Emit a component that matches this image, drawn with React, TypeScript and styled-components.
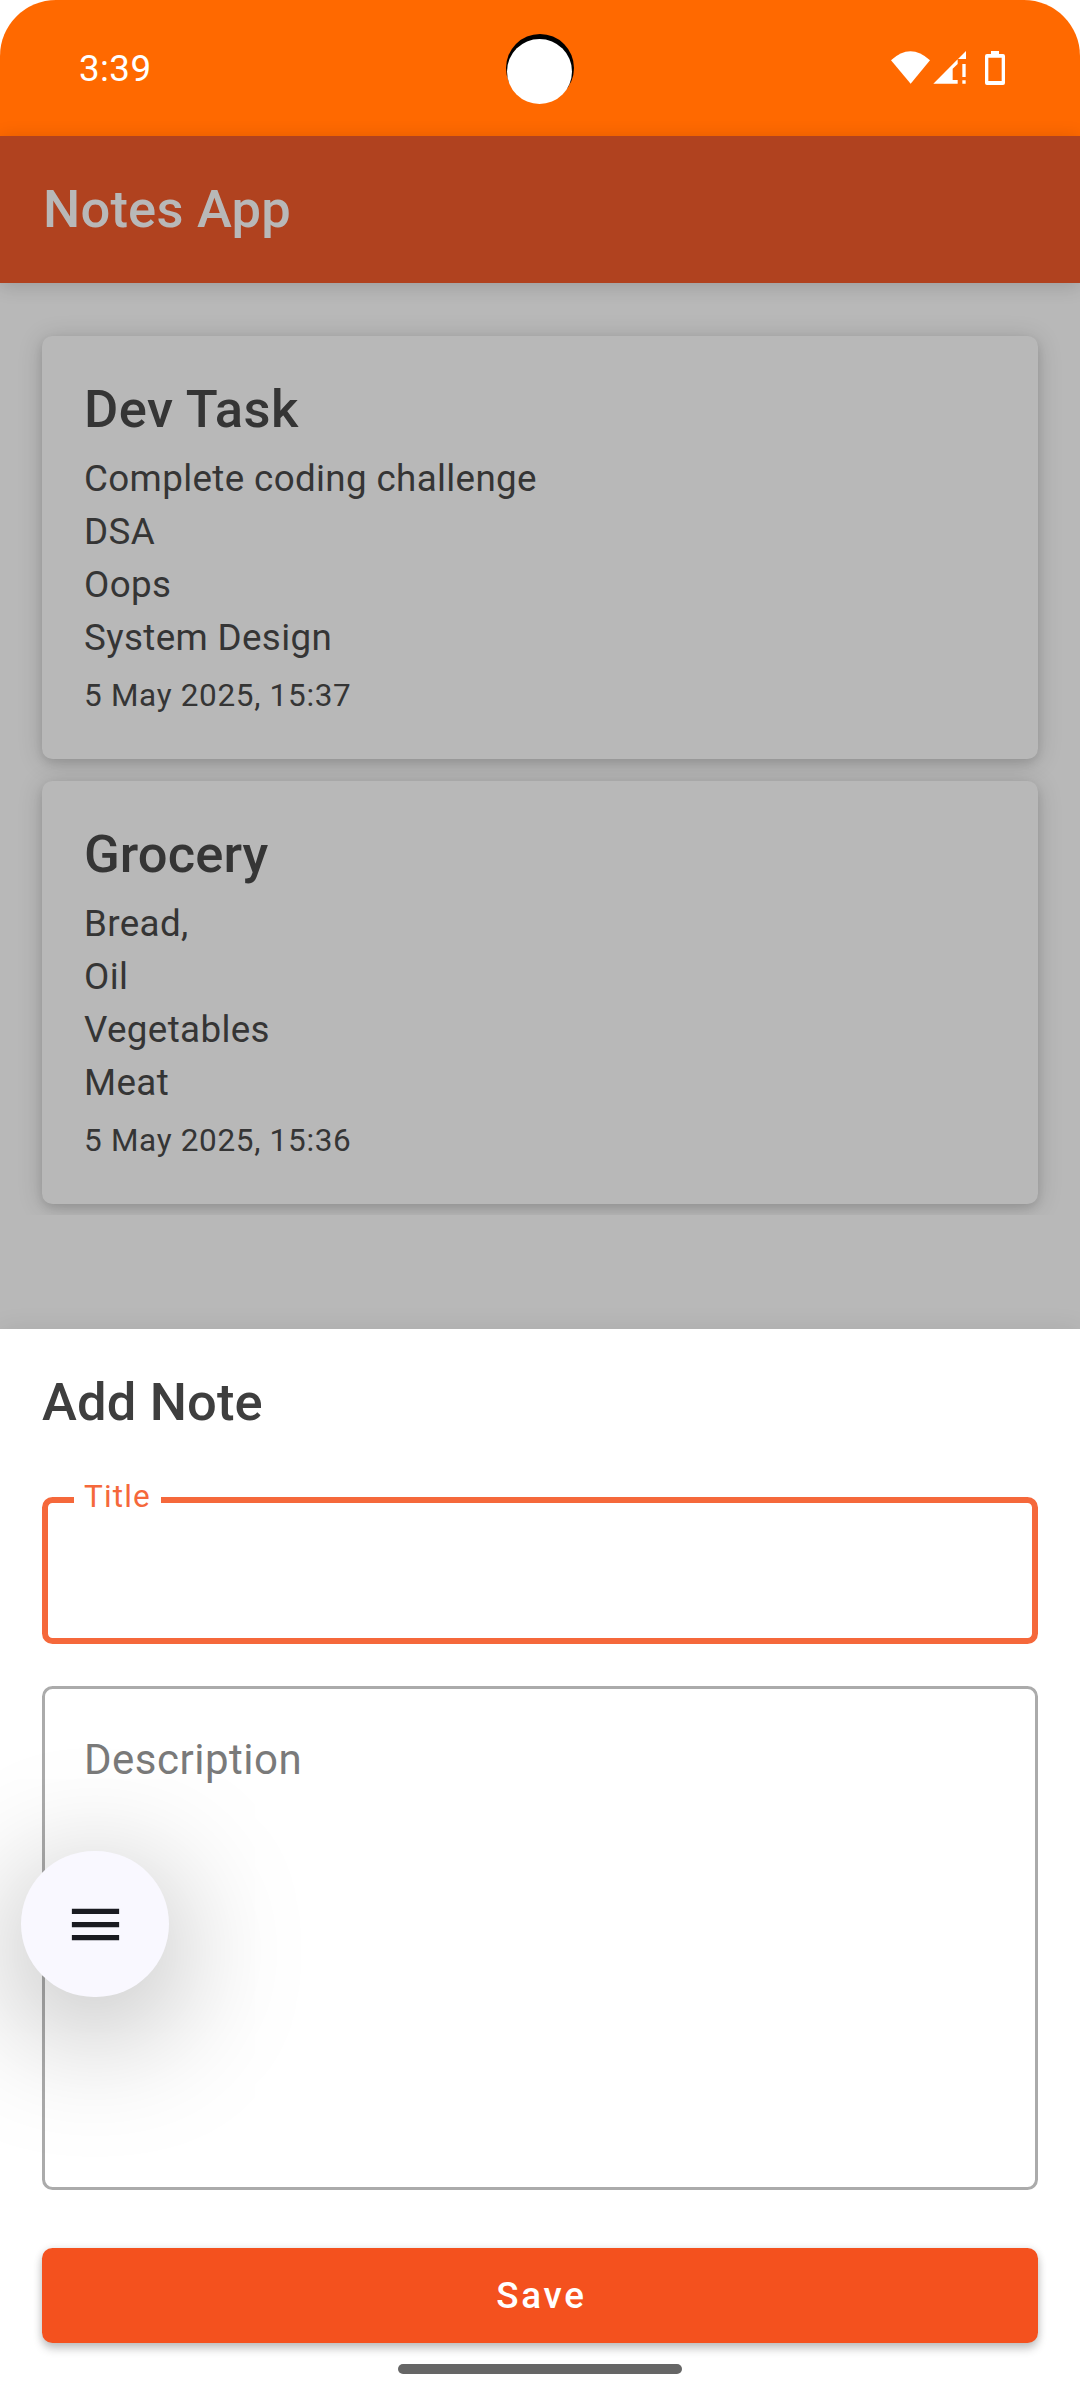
import React from 'react';
import styled, { createGlobalStyle } from 'styled-components';

const GlobalStyle = createGlobalStyle`
  * { box-sizing: border-box; }
  body { margin: 0; background: #fff; font-family: Roboto, sans-serif; }
  h1, h2, p { margin: 0; }
`;

const Screen = styled.div`
  position: relative;
  width: 1080px;
  height: 2400px;
  display: flex;
  flex-direction: column;
  overflow: hidden;
  background: #b8b8b8;
`;

const StatusBand = styled.div`
  background: #fff;
`;

const StatusBar = styled.div`
  position: relative;
  height: 136px;
  display: flex;
  justify-content: space-between;
  align-items: center;
  padding: 0 73px 0 79px;
  background: #ff6900;
  border-radius: 56px 56px 0 0;
`;

const Clock = styled.span`
  padding-top: 2px;
  color: #fff;
  font-size: 36.75px;
  line-height: 44px;
  letter-spacing: 0.4px;
`;

const StatusIcons = styled.svg`
  display: block;
`;

const CameraHole = styled.div`
  position: absolute;
  left: 506px;
  top: 34px;
  width: 68px;
  height: 68px;
  border-radius: 50%;
  background: #000;
  &::after {
    content: '';
    position: absolute;
    left: 1px;
    top: 5px;
    width: 65px;
    height: 65px;
    border-radius: 50%;
    background: #fff;
  }
`;

const AppBar = styled.header`
  position: relative;
  z-index: 1;
  height: 147px;
  display: flex;
  align-items: center;
  padding: 0 42px 1px 43px;
  background: #b0421f;
  color: #b8b8b8;
  box-shadow: 0 3px 18px rgba(0, 0, 0, 0.16);
`;

const Heading = styled.h1<{ $tracking?: number }>`
  font-size: 52.5px;
  line-height: 62px;
  font-weight: 500;
  letter-spacing: ${(p) => p.$tracking ?? 0.3}px;
`;

const NoteList = styled.main`
  height: 932px;
  display: flex;
  flex-direction: column;
  gap: 22px;
  padding: 53px 42px 0;
  overflow: hidden;
`;

const NoteCard = styled.article`
  flex: none;
  height: 423px;
  padding: 42px;
  display: flex;
  flex-direction: column;
  border-radius: 10.5px;
  background: #b8b8b8;
  color: #353535;
  box-shadow: 0 4px 8px rgba(0, 0, 0, 0.1), 0 3px 24px rgba(0, 0, 0, 0.17);
`;

const NoteBody = styled.p`
  margin-top: 12px;
  font-size: 36.75px;
  line-height: 53px;
  letter-spacing: 0.36px;
  white-space: pre-line;
`;

const NoteDate = styled.p`
  margin-top: 13px;
  font-size: 31.5px;
  line-height: 37px;
  letter-spacing: 0.68px;
`;

const Sheet = styled.section`
  position: relative;
  height: 1071px;
  margin-top: 114px;
  padding: 42px 42px 0;
  display: flex;
  flex-direction: column;
  background: #fff;
  color: #3e3e3e;
  box-shadow: 0 0 24px rgba(0, 0, 0, 0.08);
`;

const Field = styled.label<{ $focused?: boolean; $height: number }>`
  position: relative;
  flex: none;
  height: ${(p) => p.$height}px;
  margin-top: ${(p) => (p.$focused ? 64 : 42)}px;
  border: ${(p) => (p.$focused ? '6px solid #f5683b' : '3px solid #ababab')};
  border-radius: 10.5px;
`;

const FloatingLabel = styled.span`
  position: absolute;
  left: 26px;
  top: -25px;
  width: 87px;
  padding-left: 10px;
  background: #fff;
  color: #f5683b;
  font-size: 31.5px;
  line-height: 37px;
  letter-spacing: 1.15px;
`;

const Placeholder = styled.span`
  display: block;
  padding: 46px 39px 0;
  color: #7a7a7a;
  font-size: 42px;
  line-height: 49px;
  letter-spacing: 0.5px;
`;

const SaveButton = styled.button`
  flex: none;
  height: 95px;
  margin-top: 58px;
  padding: 0 0 0 3px;
  border: 0;
  border-radius: 10.5px;
  background: #f4511e;
  color: #fff;
  font: 500 36.75px/44px Roboto, sans-serif;
  letter-spacing: 2.8px;
  box-shadow: 0 6px 10px rgba(0, 0, 0, 0.2), 0 1px 8px rgba(0, 0, 0, 0.12);
`;

const HomeIndicator = styled.div`
  align-self: center;
  width: 284px;
  height: 10px;
  margin-top: 21px;
  border-radius: 5px;
  background: #666;
`;

const MenuBubble = styled.div`
  position: absolute;
  left: 21px;
  top: 1851px;
  width: 148px;
  height: 146px;
  border-radius: 74px;
  display: flex;
  align-items: center;
  justify-content: center;
  background: #f9f8ff;
  box-shadow: 0 27px 132px rgba(0, 0, 0, 0.35);
`;

const notes = [
  {
    title: 'Dev Task',
    body: 'Complete coding challenge\nDSA\nOops\nSystem Design',
    date: '5 May 2025, 15:37',
    tracking: 0.45,
  },
  {
    title: 'Grocery',
    body: 'Bread,\nOil\nVegetables\nMeat',
    date: '5 May 2025, 15:36',
    tracking: 0.1,
  },
];

export default function App() {
  return (
    <Screen>
      <GlobalStyle />
      <StatusBand>
        <StatusBar>
          <Clock>3:39</Clock>
          <CameraHole />
          <StatusIcons width="116" height="36" viewBox="0 0 348 108" fill="#fff">
            <path d="M0 31Q58 -23 117 31L59 101Z" />
            <path d="M127 101H200V90H185V56L200 42V28Z" />
            <path d="M201 27L225 3V27Z" />
            <path d="M214 42H224V81H214ZM214 91H224V101H214Z" />
            <path
              fillRule="evenodd"
              d="M300 3H324V12H336Q342 12 342 18V99Q342 105 336 105H288Q282 105 282 99V18Q282 12 288 12H300ZM292 23V93H332V23Z"
            />
          </StatusIcons>
        </StatusBar>
      </StatusBand>
      <AppBar>
        <Heading $tracking={0.2}>Notes App</Heading>
      </AppBar>
      <NoteList>
        {notes.map((note) => (
          <NoteCard key={note.title}>
            <Heading as="h2" $tracking={note.tracking}>
              {note.title}
            </Heading>
            <NoteBody>{note.body}</NoteBody>
            <NoteDate>{note.date}</NoteDate>
          </NoteCard>
        ))}
      </NoteList>
      <Sheet>
        <Heading as="h2" $tracking={0.15}>
          Add Note
        </Heading>
        <Field $focused $height={147}>
          <FloatingLabel>Title</FloatingLabel>
        </Field>
        <Field $height={504}>
          <Placeholder>Description</Placeholder>
        </Field>
        <SaveButton>Save</SaveButton>
        <HomeIndicator />
      </Sheet>
      <MenuBubble>
        <svg width="63" height="63" viewBox="0 0 24 24" fill="#1a1b21">
          <path d="M3 18h18v-2H3v2zm0-5h18v-2H3v2zm0-7v2h18V6H3z" />
        </svg>
      </MenuBubble>
    </Screen>
  );
}
